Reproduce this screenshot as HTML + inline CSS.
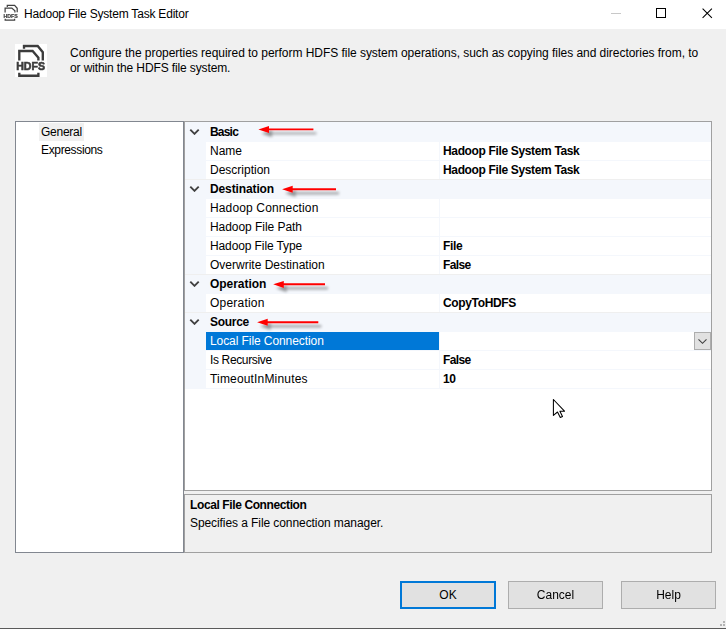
<!DOCTYPE html>
<html><head><meta charset="utf-8">
<style>
*{margin:0;padding:0;box-sizing:border-box}
html,body{width:726px;height:629px;overflow:hidden;background:#F0F0F0}
body{position:relative;font-family:"Liberation Sans",sans-serif;font-size:12px;color:#000}
.a{position:absolute}
.t{position:absolute;white-space:nowrap;line-height:18px;height:18px}
.b{font-weight:bold;letter-spacing:-0.35px}
#title{left:0;top:0;width:726px;height:29px;background:#fff}
#left{left:15px;top:121px;width:169px;height:432px;border:1px solid #828790;background:#fff}
#grid{left:184px;top:121px;width:528px;height:370px;border:1px solid #A0A0A0;background:#fff}
#desc{left:184px;top:494px;width:528px;height:59px;border:1px solid #A0A0A0;background:#F0F0F0}
.btn{position:absolute;top:581px;height:28px;background:#E1E1E1;border:1px solid #ADADAD;text-align:center;line-height:26px}
.cat{position:absolute;left:185px;width:526px;height:19px;background:#F4F7FC}
.row{position:absolute;left:206px;width:505px;height:18px;background:#fff}
.sep{position:absolute;left:439px;width:1px;height:18px;background:#F4F7FC}
</style></head><body>
<div id="title" class="a">
  <svg class="a" style="left:0;top:0;will-change:transform" width="22" height="24" viewBox="0 0 22 24">
    <g fill="none" stroke="#404040" stroke-width="1.25">
      <path d="M7.3 7 V5.4 H14.6 L17.2 8.3 V12.2"/>
      <path d="M5.1 12.4 V8.1 H11.8 L14.9 10.9 V12.4"/>
      <path d="M5.2 18.8 V20.1 H14.6 V18.8"/>
    </g>
    <text x="3.4" y="17.6" font-family="Liberation Sans" font-weight="bold" font-size="5" fill="#404040" textLength="14.4" lengthAdjust="spacingAndGlyphs" stroke="#404040" stroke-width="0.2">HDFS</text>
  </svg>
  <div class="t" style="left:24px;top:5px;font-size:12px;letter-spacing:-0.2px">Hadoop File System Task Editor</div>
  <div class="a" style="left:611px;top:13px;width:10px;height:1px;background:#C8C8C8"></div>
  <div class="a" style="left:656px;top:8px;width:10px;height:10px;border:1px solid #000"></div>
  <svg class="a" style="left:701px;top:7px" width="13" height="13" viewBox="0 0 13 13">
    <path d="M1.6 1.6 L10.9 10.9 M10.9 1.6 L1.6 10.9" stroke="#000" stroke-width="1.05" fill="none"/>
  </svg>
</div>

<!-- header icon -->
<div class="a" style="left:15px;top:44px;width:32px;height:33px;background:#fff"></div>
<svg class="a" style="left:15px;top:44px;will-change:transform" width="33" height="34" viewBox="0 0 33 34">
  <g fill="none" stroke="#3C3C3C" stroke-width="2.35">
    <path d="M9 4.8 V2 H22.7 L27.8 8.2 V16.4"/>
    <path d="M4.3 16.4 V7 H17.6 L23.4 13.6 V16.4"/>
    <path d="M4.3 28.7 V31.7 H23.4 V28.7"/>
  </g>
  <text x="1.2" y="26.4" font-family="Liberation Sans" font-weight="bold" font-size="11.2" fill="#3C3C3C" stroke="#3C3C3C" stroke-width="0.6" textLength="28.8" lengthAdjust="spacingAndGlyphs">HDFS</text>
</svg>
<div class="t" style="left:70px;top:46px;line-height:15px;height:15px;letter-spacing:-0.04px">Configure the properties required to perform HDFS file system operations, such as copying files and directories from, to</div>
<div class="t" style="left:70px;top:61px;line-height:15px;height:15px;letter-spacing:-0.12px">or within the HDFS file system.</div>

<!-- left panel -->
<div id="left" class="a"></div>
<div class="a" style="left:39px;top:123px;width:45px;height:18px;background:#F0F0F0"></div>
<div class="t" style="left:41px;top:123px;letter-spacing:-0.25px">General</div>
<div class="t" style="left:41px;top:141px;letter-spacing:-0.35px">Expressions</div>

<!-- grid -->
<div id="grid" class="a"></div>
<div class="a" style="left:185px;top:122px;width:21px;height:267px;background:#F4F7FC"></div>
<!--rows-->
<div class="a" style="left:185px;top:122px;width:526px;height:267px;background:#F4F7FC"></div>
<svg class="a" style="left:189px;top:128px" width="11" height="7" viewBox="0 0 11 7"><path d="M1.3 1.6 L5.5 5.8 L9.7 1.6" fill="none" stroke="#404040" stroke-width="1.9"/></svg>
<div class="t b" style="left:210px;top:123px;letter-spacing:-0.8px">Basic</div>
<div class="a" style="left:206px;top:142px;width:233px;height:18px;background:#fff"></div>
<div class="a" style="left:440px;top:142px;width:271px;height:18px;background:#fff"></div>
<div class="t" style="left:210px;top:142px;letter-spacing:0px">Name</div>
<div class="t b" style="left:443px;top:142px;letter-spacing:-0.35px">Hadoop File System Task</div>
<div class="a" style="left:206px;top:161px;width:233px;height:18px;background:#fff"></div>
<div class="a" style="left:440px;top:161px;width:271px;height:18px;background:#fff"></div>
<div class="t" style="left:210px;top:161px;letter-spacing:0px">Description</div>
<div class="t b" style="left:443px;top:161px;letter-spacing:-0.35px">Hadoop File System Task</div>
<div class="a" style="left:185px;top:179px;width:526px;height:1px;background:#EFEFEF"></div>
<svg class="a" style="left:189px;top:185px" width="11" height="7" viewBox="0 0 11 7"><path d="M1.3 1.6 L5.5 5.8 L9.7 1.6" fill="none" stroke="#404040" stroke-width="1.9"/></svg>
<div class="t b" style="left:210px;top:180px;letter-spacing:-0.12px">Destination</div>
<div class="a" style="left:206px;top:199px;width:233px;height:18px;background:#fff"></div>
<div class="a" style="left:440px;top:199px;width:271px;height:18px;background:#fff"></div>
<div class="t" style="left:210px;top:199px;letter-spacing:0.14px">Hadoop Connection</div>
<div class="a" style="left:206px;top:218px;width:233px;height:18px;background:#fff"></div>
<div class="a" style="left:440px;top:218px;width:271px;height:18px;background:#fff"></div>
<div class="t" style="left:210px;top:218px;letter-spacing:-0.05px">Hadoop File Path</div>
<div class="a" style="left:206px;top:237px;width:233px;height:18px;background:#fff"></div>
<div class="a" style="left:440px;top:237px;width:271px;height:18px;background:#fff"></div>
<div class="t" style="left:210px;top:237px;letter-spacing:-0.11px">Hadoop File Type</div>
<div class="t b" style="left:443px;top:237px;letter-spacing:-0.35px">File</div>
<div class="a" style="left:206px;top:256px;width:233px;height:18px;background:#fff"></div>
<div class="a" style="left:440px;top:256px;width:271px;height:18px;background:#fff"></div>
<div class="t" style="left:210px;top:256px;letter-spacing:0px">Overwrite Destination</div>
<div class="t b" style="left:443px;top:256px;letter-spacing:-0.65px">False</div>
<div class="a" style="left:185px;top:274px;width:526px;height:1px;background:#EFEFEF"></div>
<svg class="a" style="left:189px;top:280px" width="11" height="7" viewBox="0 0 11 7"><path d="M1.3 1.6 L5.5 5.8 L9.7 1.6" fill="none" stroke="#404040" stroke-width="1.9"/></svg>
<div class="t b" style="left:210px;top:275px;letter-spacing:-0.05px">Operation</div>
<div class="a" style="left:206px;top:294px;width:233px;height:18px;background:#fff"></div>
<div class="a" style="left:440px;top:294px;width:271px;height:18px;background:#fff"></div>
<div class="t" style="left:210px;top:294px;letter-spacing:0.21px">Operation</div>
<div class="t b" style="left:443px;top:294px;letter-spacing:-0.35px">CopyToHDFS</div>
<div class="a" style="left:185px;top:312px;width:526px;height:1px;background:#EFEFEF"></div>
<svg class="a" style="left:189px;top:318px" width="11" height="7" viewBox="0 0 11 7"><path d="M1.3 1.6 L5.5 5.8 L9.7 1.6" fill="none" stroke="#404040" stroke-width="1.9"/></svg>
<div class="t b" style="left:210px;top:313px;letter-spacing:-0.3px">Source</div>
<div class="a" style="left:206px;top:332px;width:233px;height:18px;background:#0078D7"></div>
<div class="a" style="left:440px;top:332px;width:271px;height:18px;background:#fff"></div>
<div class="t" style="left:210px;top:332px;color:#fff;letter-spacing:-0.08px">Local File Connection</div>
<div class="a" style="left:694px;top:332px;width:17px;height:18px;background:#E1E1E1;border:1px solid #ADADAD"></div>
<svg class="a" style="left:697px;top:338px" width="11" height="7" viewBox="0 0 11 7"><path d="M1.5 1.3 L5.5 5.3 L9.5 1.3" fill="none" stroke="#404040" stroke-width="1.1"/></svg>
<div class="a" style="left:206px;top:351px;width:233px;height:18px;background:#fff"></div>
<div class="a" style="left:440px;top:351px;width:271px;height:18px;background:#fff"></div>
<div class="t" style="left:210px;top:351px;letter-spacing:-0.36px">Is Recursive</div>
<div class="t b" style="left:443px;top:351px;letter-spacing:-0.65px">False</div>
<div class="a" style="left:206px;top:370px;width:233px;height:18px;background:#fff"></div>
<div class="a" style="left:440px;top:370px;width:271px;height:18px;background:#fff"></div>
<div class="t" style="left:210px;top:370px;letter-spacing:0.17px">TimeoutInMinutes</div>
<div class="t b" style="left:443px;top:370px;letter-spacing:-0.35px">10</div>
<!--/rows-->
<!-- arrows -->
<svg class="a" style="left:0;top:0" width="726" height="629" viewBox="0 0 726 629">
<defs><filter id="sh" x="-20%" y="-100%" width="140%" height="300%"><feGaussianBlur in="SourceAlpha" stdDeviation="1.7"/><feOffset dx="3" dy="3.5"/><feComponentTransfer><feFuncA type="linear" slope="0.42"/></feComponentTransfer><feMerge><feMergeNode/><feMergeNode in="SourceGraphic"/></feMerge></filter></defs>
<g filter="url(#sh)" fill="#FF0000">
<path d="M258.4 129.4 L269.0 126.0 L269.0 128.45 L313.4 128.45 L313.4 130.35 L269.0 130.35 L269.0 133.0 Z"/>
<path d="M282.1 189.2 L292.7 185.8 L292.7 188.25 L336 188.25 L336 190.15 L292.7 190.15 L292.7 192.8 Z"/>
<path d="M273.2 284.3 L283.8 280.9 L283.8 283.35 L325 283.35 L325 285.25 L283.8 285.25 L283.8 287.9 Z"/>
<path d="M257.1 322.2 L267.7 318.8 L267.7 321.25 L318.3 321.25 L318.3 323.15 L267.7 323.15 L267.7 325.8 Z"/>
</g></svg>
<svg class="a" style="left:552px;top:398px" width="14" height="21" viewBox="0 0 14 21"><path d="M1.4 1.5 L1.4 17.4 L5.5 14 L8.3 19.5 L10.5 18.5 L7.9 13.2 L12.5 13.2 Z" fill="#fff" stroke="#000" stroke-width="1.05" stroke-linejoin="round"/></svg>
<!-- description -->
<div id="desc" class="a"></div>
<div class="t b" style="left:190px;top:496px;letter-spacing:-0.39px">Local File Connection</div>
<div class="t" style="left:190px;top:514px;letter-spacing:-0.08px">Specifies a File connection manager.</div>

<!-- buttons -->
<div class="btn" style="left:400px;width:96px;border:2px solid #0078D7;line-height:24px">OK</div>
<div class="btn" style="left:508px;width:95px">Cancel</div>
<div class="btn" style="left:621px;width:95px">Help</div>

<!-- bottom line & grip -->
<div class="a" style="left:0;top:628px;width:726px;height:1px;background:#5A5A5A"></div>
<div class="a" style="left:723px;top:621px;width:2px;height:2px;background:#B4B4B4"></div>
<div class="a" style="left:720px;top:624px;width:2px;height:2px;background:#B4B4B4"></div>
<div class="a" style="left:723px;top:624px;width:2px;height:2px;background:#B4B4B4"></div>
</body></html>
